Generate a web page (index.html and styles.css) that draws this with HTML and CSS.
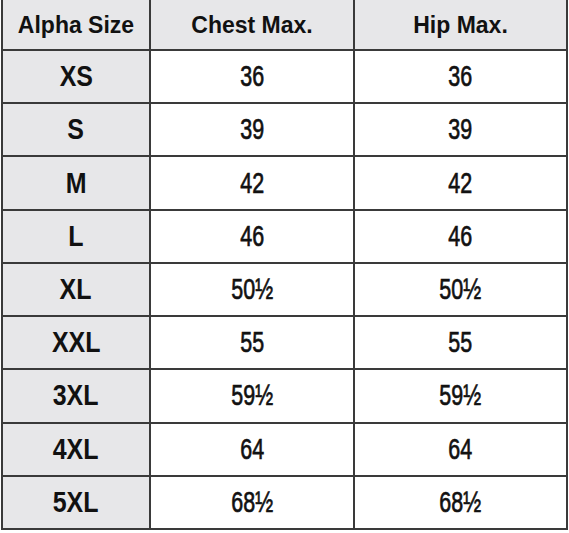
FILE: index.html
```html
<!DOCTYPE html>
<html>
<head>
<meta charset="utf-8">
<link rel="stylesheet" href="styles.css">
</head>
<body>
<div class="chart">
  <div class="cell head"><span>Alpha Size</span></div>
  <div class="cell head"><span>Chest Max.</span></div>
  <div class="cell head"><span>Hip Max.</span></div>

  <div class="cell size"><span>XS</span></div>
  <div class="cell num"><span>36</span></div>
  <div class="cell num"><span>36</span></div>

  <div class="cell size"><span>S</span></div>
  <div class="cell num"><span>39</span></div>
  <div class="cell num"><span>39</span></div>

  <div class="cell size"><span>M</span></div>
  <div class="cell num"><span>42</span></div>
  <div class="cell num"><span>42</span></div>

  <div class="cell size"><span>L</span></div>
  <div class="cell num"><span>46</span></div>
  <div class="cell num"><span>46</span></div>

  <div class="cell size"><span>XL</span></div>
  <div class="cell num"><span>50½</span></div>
  <div class="cell num"><span>50½</span></div>

  <div class="cell size"><span>XXL</span></div>
  <div class="cell num"><span>55</span></div>
  <div class="cell num"><span>55</span></div>

  <div class="cell size"><span>3XL</span></div>
  <div class="cell num"><span>59½</span></div>
  <div class="cell num"><span>59½</span></div>

  <div class="cell size"><span>4XL</span></div>
  <div class="cell num"><span>64</span></div>
  <div class="cell num"><span>64</span></div>

  <div class="cell size"><span>5XL</span></div>
  <div class="cell num"><span>68½</span></div>
  <div class="cell num"><span>68½</span></div>
</div>
</body>
</html>
```
FILE: styles.css
```css
html, body {
  margin: 0;
  padding: 0;
  background: #ffffff;
}

.chart {
  box-sizing: border-box;
  margin-left: 1px;
  width: 567px;
  height: 530px;
  display: grid;
  grid-template-columns: 146px 202px 211px;
  grid-template-rows: 49px repeat(9, 1fr);
  gap: 2px;
  padding: 0 2px 2px 2px;
  background: #3a3a3a;
}

.cell {
  display: flex;
  align-items: center;
  justify-content: center;
  background: #ffffff;
  color: #111111;
  overflow: hidden;
}

.cell span {
  display: inline-block;
  white-space: nowrap;
}

.head {
  background: #e7e7e9;
  font-family: "Liberation Sans", Arial, sans-serif;
  font-weight: 700;
  font-size: 23px;
  padding-top: 1px;
}

.size {
  background: #e7e7e9;
  font-family: "Liberation Sans", Arial, sans-serif;
  font-weight: 700;
  font-size: 29px;
}

.size span {
  transform: scaleX(0.86);
}

.num {
  font-family: "Liberation Sans Narrow", "Liberation Sans", Arial, sans-serif;
  font-weight: 400;
  font-size: 29px;
  -webkit-text-stroke: 0.7px #111111;
}

.num span {
  transform: scaleX(0.74);
}
```
